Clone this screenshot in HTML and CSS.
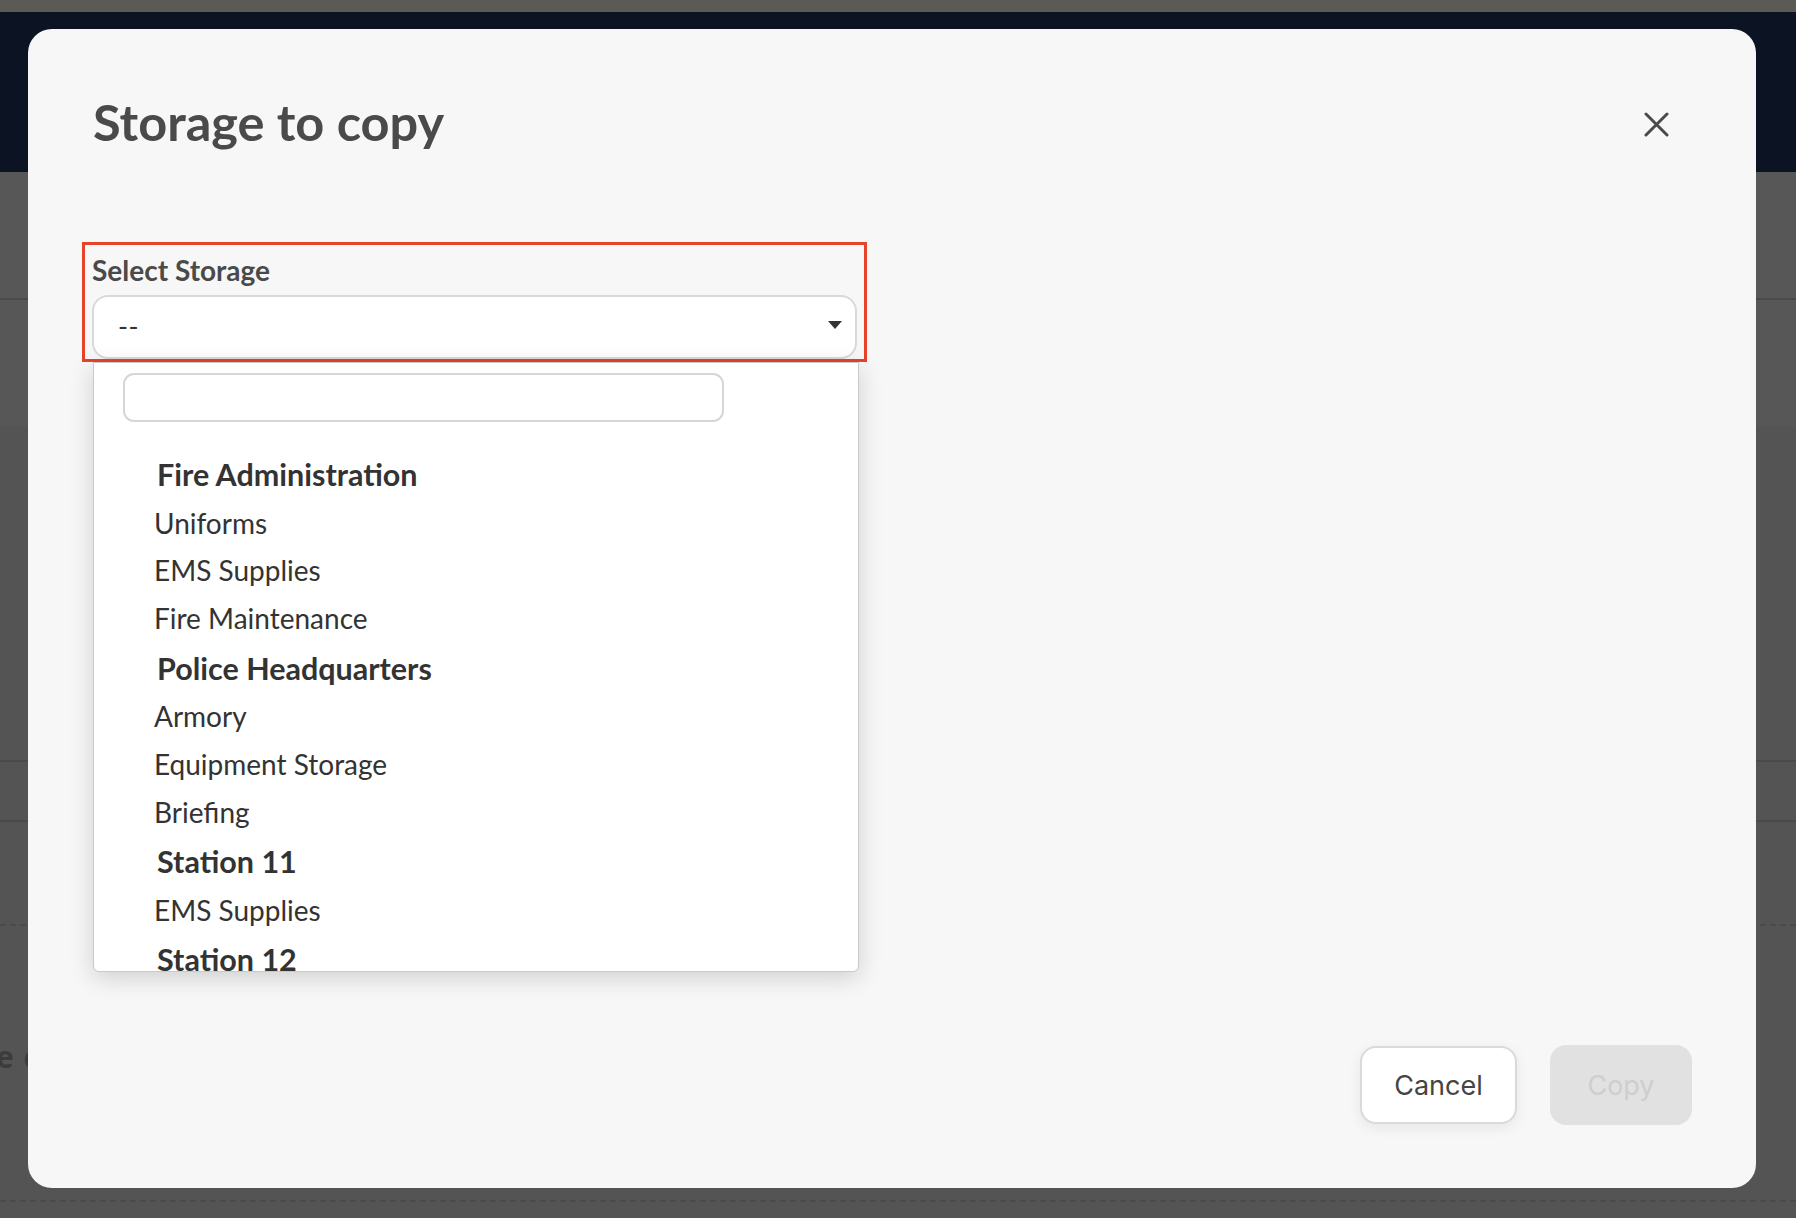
FILE: index.html
```html
<!DOCTYPE html>
<html lang="en">
<head>
<meta charset="utf-8">
<title>Storage to copy</title>
<link rel="stylesheet" href="styles.css">
</head>
<body>
<div class="page">
  <div class="topstrip"></div>
  <div class="navbar"></div>
  <div class="subbar"></div>
  <div class="filterbar"></div>
  <div class="content">
    <div class="block block-a"></div>
    <div class="block block-b"></div>
    <div class="block block-c"></div>
    <div class="block block-d"><span class="ghost-text">e c</span></div>
  </div>
</div>

<div class="backdrop">
  <div class="modal">
    <div class="modal-header">
      <h2 class="modal-title">Storage to copy</h2>
      <button class="close-btn" aria-label="Close">
        <svg width="25" height="25" viewBox="0 0 25 25"><path d="M2 2 L23 23 M23 2 L2 23" stroke="#4a4a4a" stroke-width="3" stroke-linecap="round" fill="none"/></svg>
      </button>
    </div>

    <div class="field-wrap">
      <label class="field-label">Select Storage</label>
      <div class="select">
        <span class="select-value">--</span>
        <span class="caret"></span>
        <div class="dropdown">
          <div class="search"></div>
          <ul class="options">
            <li class="group">Fire Administration</li>
            <li class="opt">Uniforms</li>
            <li class="opt">EMS Supplies</li>
            <li class="opt">Fire Maintenance</li>
            <li class="group">Police Headquarters</li>
            <li class="opt">Armory</li>
            <li class="opt">Equipment Storage</li>
            <li class="opt">Briefing</li>
            <li class="group">Station 11</li>
            <li class="opt">EMS Supplies</li>
            <li class="group">Station 12</li>
          </ul>
        </div>
      </div>
    </div>

    <div class="modal-footer">
      <button class="btn btn-cancel">Cancel</button>
      <button class="btn btn-copy">Copy</button>
    </div>
  </div>
</div>
</body>
</html>
```

FILE: styles.css
```css
* { box-sizing: border-box; }
html, body { margin: 0; padding: 0; }
body {
  width: 1796px;
  height: 1218px;
  overflow: hidden;
  background: #545454;
  font-family: "Lato", "Liberation Sans", sans-serif;
  position: relative;
}

/* faux page behind the overlay */
.page { display: flex; flex-direction: column; height: 1218px; }
.topstrip { height: 12px; background: #5b5a55; }
.navbar { height: 160px; background: #0c1322; }
.subbar { height: 128px; background: #575757; border-bottom: 2px solid #4b4b4b; }
.filterbar { height: 126px; background: #575757; box-shadow: 0 3px 4px rgba(0,0,0,0.25); }
.content { flex: 1; display: flex; flex-direction: column; background: #545454; }
.block-a { height: 336px; border-bottom: 2px solid #4a4a4a; }
.block-b { height: 60px; border-bottom: 2px solid #4a4a4a; }
.block-c { height: 104px; border-bottom: 2px dashed #4a4a4a; }
.block-d { flex: 1; padding-top: 110px; border-bottom: 2px dashed #4a4a4a; margin-bottom: 16px; }
.ghost-text { font-family: "Open Sans", sans-serif; font-weight: 700; font-size: 30px; color: #3c3c3c; letter-spacing: 1px; margin-left: -4px; }

/* overlay modal */
.backdrop { position: absolute; inset: 0; }
.modal {
  position: absolute;
  left: 28px; top: 29px;
  width: 1728px; height: 1159px;
  background: #f7f7f7;
  border-radius: 24px;
  padding: 63px 64px 63px 64px;
  display: flex;
  flex-direction: column;
}

.modal-header { display: flex; align-items: center; justify-content: space-between; }
.modal-title {
  margin: 0;
  font-family: "Lato", sans-serif;
  font-weight: 700;
  font-size: 50.5px;
  line-height: 59px;
  color: #4a4a4a;
  padding-left: 1px;
}
.close-btn {
  border: 0; background: transparent; padding: 0;
  width: 25px; height: 25px;
  margin-right: 23px; margin-top: 6px;
  display: flex;
}

.field-wrap {
  margin-top: 91px;
  margin-left: -10px;
  width: 785px;
  border: 3px solid #e5432b;
  padding: 8px 7px 0 7px;
  display: flex;
  flex-direction: column;
}
.field-label {
  font-family: "Lato", sans-serif;
  font-weight: 700;
  font-size: 28px;
  line-height: 34px;
  color: #4a4a4a;
}
.select {
  position: relative;
  margin-top: 8px;
  height: 64px;
  background: #fff;
  border: 2px solid #d9d9d9;
  border-radius: 16px;
  display: flex;
  align-items: center;
  justify-content: space-between;
  padding: 0 13px 0 24px;
}
.select-value { font-size: 27px; color: #333; letter-spacing: 0.5px; margin-top: -3px; }
.caret {
  width: 0; height: 0;
  border-left: 7.5px solid transparent;
  border-right: 7.5px solid transparent;
  border-top: 8px solid #333;
  margin-top: -4px;
}

.dropdown {
  position: absolute;
  left: -1px; top: calc(100% + 5px);
  width: 766px; height: 610px;
  background: #fff;
  border: 1px solid #c9c9c9;
  border-radius: 0 0 6px 6px;
  box-shadow: 0 6px 24px rgba(0,0,0,0.16);
  overflow: hidden;
  padding-top: 10px;
  z-index: 2;
}
.search {
  margin-left: 29px;
  width: 601px; height: 49px;
  border: 2px solid #d6d6d6;
  border-radius: 11px;
  background: #fff;
}
.options { list-style: none; margin: 27px 0 0 0; padding: 0; color: #333; }
.group {
  font-weight: 700;
  font-size: 30.5px;
  line-height: 50.5px;
  padding-left: 63px;
}
.opt {
  font-weight: 400;
  font-size: 28px;
  line-height: 47.7px;
  padding-left: 60px;
}

.modal-footer {
  margin-top: auto;
  display: flex;
  justify-content: flex-end;
  align-items: center;
  gap: 33px;
}
.btn {
  font-family: "Inter", "Liberation Sans", sans-serif;
  font-size: 27px;
  border-radius: 16px;
  display: flex; align-items: center; justify-content: center;
}
.btn-cancel {
  width: 157px; height: 78px;
  background: #fff;
  border: 2px solid #dadada;
  color: #444;
  box-shadow: 0 4px 14px rgba(0,0,0,0.07);
}
.btn-copy {
  width: 142px; height: 80px;
  background: #e1e1e1;
  border: 0;
  color: #cecece;
}
```
